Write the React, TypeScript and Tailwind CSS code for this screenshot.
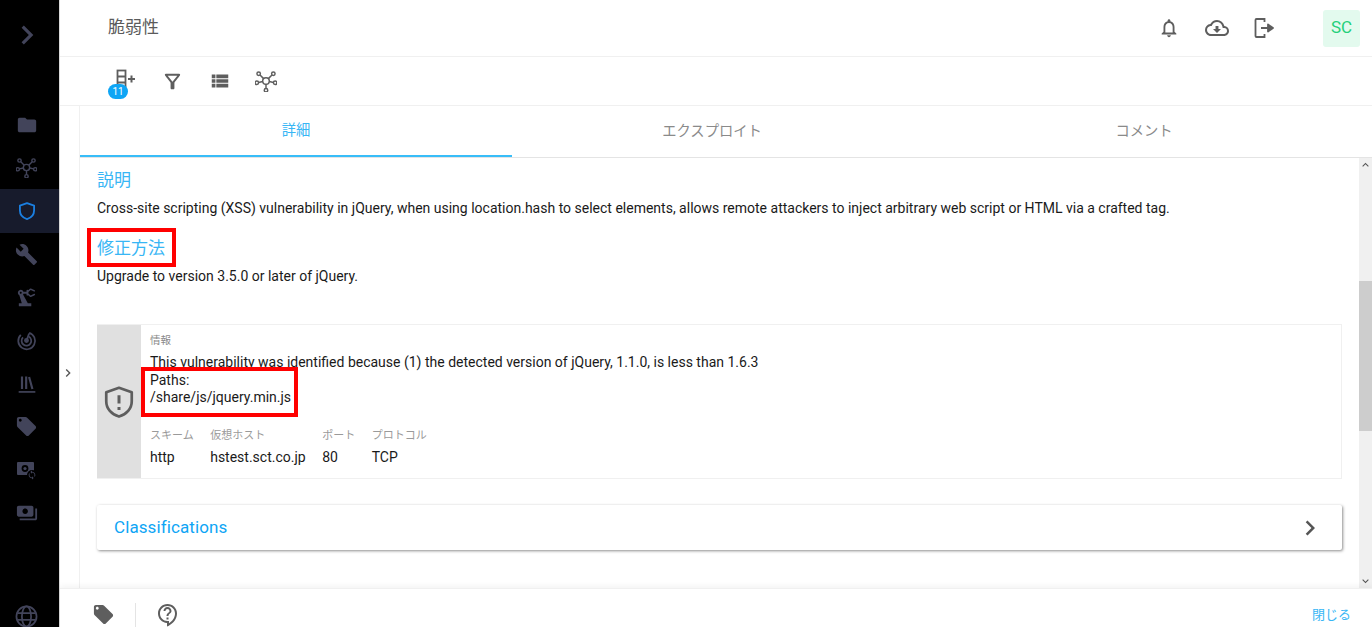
import React from "react";
import { MdFolder, MdBuild, MdPrecisionManufacturing, MdLocalOffer, MdOutlineNotifications, MdOutlineCloudDownload, MdViewList, MdOutlineFilterAlt, MdChevronRight, MdExpandLess, MdExpandMore, MdOutlineContactSupport, MdPayments, MdOutlineSync } from "react-icons/md";

const font = "font-['Roboto','Noto_Sans_CJK_JP',sans-serif]";

function Hub({ size, color }: { size: number; color: string }) {
  const nodes = [[4, 4], [20, 4], [2, 14], [22, 14], [12, 22]];
  return (
    <svg width={size} height={size} viewBox="0 0 24 24" fill="none" stroke={color} strokeWidth="1.6">
      <circle cx="12" cy="12" r="3.6" />
      {nodes.map(([x, y]) => (
        <circle key={`${x}-${y}`} cx={x} cy={y} r="1.9" />
      ))}
      <path d="M5.5 5.5 9.4 9.4M18.5 5.5 14.6 9.4M3.9 13.6 8.4 12.6M20.1 13.6 15.6 12.6M12 20.1V15.6" />
    </svg>
  );
}

function Shield({ size, color, strokeWidth = 2, mark = false }: { size: number; color: string; strokeWidth?: number; mark?: boolean }) {
  return (
    <svg width={size} height={size} viewBox="0 0 24 24" fill="none" stroke={color} strokeWidth={strokeWidth}>
      <path d="M12 2.5 20.5 5.5V11.5C20.5 16.5 17 20.3 12 21.7 7 20.3 3.5 16.5 3.5 11.5V5.5Z" strokeLinejoin="round" />
      {mark && <path d="M12 7.5V13M12 15.3V17.3" strokeWidth="2" />}
    </svg>
  );
}

function Radar({ size, color }: { size: number; color: string }) {
  return (
    <svg width={size} height={size} viewBox="0 0 24 24" fill="none" stroke={color} strokeWidth="2">
      <path d="M15 3.2A9.6 9.6 0 1 1 5.5 5.5" />
      <path d="M14.5 7.5A5.5 5.5 0 1 1 8 8.5" />
      <circle cx="12" cy="12" r="1.8" fill={color} />
      <path d="M12 12 15 4" />
    </svg>
  );
}

function Library({ size, color }: { size: number; color: string }) {
  return (
    <svg width={size} height={size} viewBox="0 0 24 24" fill="none" stroke={color} strokeWidth="2.6">
      <path d="M6 3V18M11 3V18M14.5 3.5 18.5 18" />
      <path d="M2 21.5H22" strokeWidth="2" />
    </svg>
  );
}

function Globe({ size, color }: { size: number; color: string }) {
  return (
    <svg width={size} height={size} viewBox="0 0 24 24" fill="none" stroke={color} strokeWidth="1.8">
      <circle cx="12" cy="12" r="10.5" />
      <ellipse cx="12" cy="12" rx="4.8" ry="10.5" />
      <path d="M2.5 8.5H21.5M2.5 15.5H21.5" />
    </svg>
  );
}

function ColumnAdd({ color }: { color: string }) {
  return (
    <svg width="22" height="22" viewBox="0 0 22 22" fill="none" stroke={color} strokeWidth="1.8">
      <rect x="3.5" y="1.5" width="8" height="18" />
      <path d="M3.5 7.5H11.5M3.5 13.5H11.5" />
      <path d="M14 10H21M17.5 6.5V13.5" strokeWidth="2" />
    </svg>
  );
}

function Logout({ color }: { color: string }) {
  return (
    <svg width="22" height="22" viewBox="0 0 22 22" fill="none" stroke={color} strokeWidth="1.8">
      <path d="M11.5 5V2H3.5C2.9 2 2.5 2.4 2.5 3V19C2.5 19.6 2.9 20 3.5 20H11.5V17" />
      <path d="M8 11H15V7.5L20 11 15 14.5V11" fill={color} strokeLinejoin="round" />
    </svg>
  );
}

function Cash({ color }: { color: string }) {
  return (
    <div className="relative h-[18px] w-[20px]">
      <svg width="17" height="13" viewBox="0 0 17 13" className="mt-[1px]">
        <rect width="17" height="13" rx="1" fill={color} />
        <circle cx="8" cy="6.5" r="3.4" fill="#000" />
        <circle cx="8" cy="6.5" r="1.6" fill={color} />
      </svg>
      <div className="absolute -bottom-[1px] right-[0px] rounded-full bg-black">
        <MdOutlineSync size={10} color={color} />
      </div>
    </div>
  );
}

const side = "#42445a";

function NavItem({ children, active = false }: { children: React.ReactNode; active?: boolean }) {
  return (
    <div className={`flex h-[43.2px] w-full items-center justify-center pr-[6px] ${active ? "bg-[#171b2c]" : ""}`}>
      {children}
    </div>
  );
}

function Field({ label, value }: { label: string; value: string }) {
  return (
    <div className="flex flex-col">
      <span className="text-[11px] leading-[16px] text-[#9a9a9a]">{label}</span>
      <span className="mt-[3px] text-[14px] leading-[20px] text-[#1a1a1a]">{value}</span>
    </div>
  );
}

export default function App() {
  return (
    <div className={`${font} flex h-[627px] w-[1372px] overflow-hidden bg-white`}>
      <aside className="flex h-full w-[60px] shrink-0 flex-col overflow-hidden border-r border-[#d8d8d8] bg-black">
        <div className="flex h-[69px] items-center justify-center pr-[6px]">
          <MdChevronRight size={38} color={side} />
        </div>
        <div className="mt-[34px] flex flex-col">
          <NavItem><MdFolder size={22} color={side} /></NavItem>
          <NavItem><Hub size={21} color={side} /></NavItem>
          <NavItem active><Shield size={20} color="#1b7fe0" strokeWidth={2.2} /></NavItem>
          <NavItem><MdBuild size={23} color={side} /></NavItem>
          <NavItem><MdPrecisionManufacturing size={23} color={side} /></NavItem>
          <NavItem><Radar size={21} color={side} /></NavItem>
          <NavItem><Library size={20} color={side} /></NavItem>
          <NavItem><MdLocalOffer size={23} color={side} /></NavItem>
          <NavItem><Cash color={side} /></NavItem>
          <NavItem><MdPayments size={22} color={side} /></NavItem>
        </div>
        <div className="mt-auto flex h-[22px] items-start justify-center pr-[6px]">
          <Globe size={23} color={side} />
        </div>
      </aside>

      <div className="flex min-w-0 flex-1 flex-col">
        <header className="flex h-[57px] shrink-0 items-center border-b border-[#f0f0f0] pl-[48px] pr-[12px]">
          <h1 className="text-[17px] font-normal text-[#5b5b5b]">脆弱性</h1>
          <div className="ml-auto flex items-center">
            <MdOutlineNotifications size={22} color="#5e5e5e" />
            <div className="ml-[25px]"><MdOutlineCloudDownload size={24} color="#5e5e5e" /></div>
            <div className="ml-[24px]"><Logout color="#5e5e5e" /></div>
            <div className="ml-[48px] flex h-[37px] w-[37px] items-center justify-center rounded-[3px] bg-[#e3faee] text-[17px] text-[#25d07a]">SC</div>
          </div>
        </header>

        <div className="flex h-[49px] shrink-0 items-center border-b border-[#f0f0f0] pl-[54px]">
          <div className="relative h-[22px] w-[22px] -translate-y-[1px]">
            <ColumnAdd color="#5e5e5e" />
            <span className="absolute left-[-6px] top-[15px] flex h-[15px] w-[20px] items-center justify-center rounded-full bg-[#0ea5f5] text-[10px] leading-none text-white">11</span>
          </div>
          <div className="ml-[25px]"><MdOutlineFilterAlt size={23} color="#5e5e5e" /></div>
          <div className="ml-[25px]"><MdViewList size={22} color="#5e5e5e" /></div>
          <div className="ml-[24px]"><Hub size={22} color="#5e5e5e" /></div>
        </div>

        <div className="flex min-h-0 flex-1">
          <div className="flex w-[20px] shrink-0 items-center justify-center border-r border-[#f0f0f0] pr-[3px] pt-[52px]">
            <MdChevronRight size={18} color="#555" />
          </div>

          <div className="flex min-w-0 flex-1 flex-col">
            <nav className="flex h-[52px] shrink-0 border-b border-[#e4e4e4] text-[14.3px]">
              <div className="flex w-[432px] items-center justify-center border-b-[2px] border-[#38bdf8] text-[#38b6f5]">詳細</div>
              <div className="flex w-[400px] items-center justify-center text-[#8a8a8a]">エクスプロイト</div>
              <div className="flex flex-1 items-center justify-center pl-[4px] text-[#8a8a8a]">コメント</div>
            </nav>

            <div className="flex min-h-0 flex-1">
              <main className="min-w-0 flex-1 px-[17px] pt-[9px]">
                <h2 className="text-[17px] leading-[26px] text-[#38b6f5]">説明</h2>
                <p className="mt-[5px] text-[14px] leading-[20px] text-[#1a1a1a]">Cross-site scripting (XSS) vulnerability in jQuery, when using location.hash to select elements, allows remote attackers to inject arbitrary web script or HTML via a crafted tag.</p>
                <h2 className="mt-[10px] flex h-[39px] w-[89px] -translate-x-[10px] items-center border-[4px] border-[#ff0000] pl-[6px] pt-[3px] text-[17px] text-[#38b6f5]">修正方法</h2>
                <p className="mt-[-1px] text-[14px] leading-[20px] text-[#1a1a1a]">Upgrade to version 3.5.0 or later of jQuery.</p>

                <section className="mt-[38px] flex h-[155px] border border-l-0 border-[#f0f0f0]">
                  <div className="flex w-[44px] shrink-0 items-center justify-center bg-[#e0e0e0]">
                    <Shield size={36} color="#5e5e5e" strokeWidth={1.8} mark />
                  </div>
                  <div className="relative pl-[9px] pt-[8px]">
                    <div className="text-[10.5px] leading-[16px] text-[#8a8a8a]">情報</div>
                    <p className="mt-[5px] text-[14px] leading-[17.5px] text-[#1a1a1a]">This vulnerability was identified because (1) the detected version of jQuery, 1.1.0, is less than 1.6.3</p>
                    <p className="text-[14px] leading-[17.5px] text-[#1a1a1a]">Paths:</p>
                    <p className="text-[14px] leading-[17.5px] text-[#1a1a1a]">/share/js/jquery.min.js</p>
                    <div className="absolute left-0 top-[42px] h-[50px] w-[157px] border-[4px] border-[#ff0000]" />
                    <div className="mt-[21px] flex gap-[16.5px]">
                      <Field label="スキーム" value="http" />
                      <Field label="仮想ホスト" value="hstest.sct.co.jp" />
                      <Field label="ポート" value="80" />
                      <Field label="プロトコル" value="TCP" />
                    </div>
                  </div>
                </section>

                <div className="mt-[26px] flex h-[45px] items-center justify-between rounded-[2px] pl-[17px] pr-[20px] shadow-[1px_1px_3px_rgba(0,0,0,0.45)]">
                  <span className="text-[17px] tracking-[0.1px] text-[#0ea5f5]">Classifications</span>
                  <MdChevronRight size={30} color="#555" className="mr-[-3px]" />
                </div>
              </main>

              <div className="flex w-[13px] shrink-0 flex-col bg-[#f0f0f0]">
                <div className="flex h-[14px] items-center justify-center"><MdExpandLess size={16} color="#555" /></div>
                <div className="mt-[109px] h-[150px] bg-[#cdcdcd]" />
                <div className="mt-auto flex h-[14px] items-center justify-center"><MdExpandMore size={16} color="#555" /></div>
              </div>
            </div>
          </div>
        </div>

        <footer className="relative flex h-[39px] shrink-0 items-start border-t border-[#f0f0f0] pl-[32px] pr-[21px] pt-[14px] shadow-[0_-2px_6px_rgba(0,0,0,0.05)]">
          <MdLocalOffer size={23} color="#5e5e5e" />
          <div className="ml-[20px] h-[24px] w-px bg-[#e4e4e4]" />
          <div className="ml-[20px]"><MdOutlineContactSupport size={24} color="#5e5e5e" /></div>
          <span className="ml-auto text-[13px] leading-[24px] text-[#38b6f5]">閉じる</span>
        </footer>
      </div>
    </div>
  );
}
